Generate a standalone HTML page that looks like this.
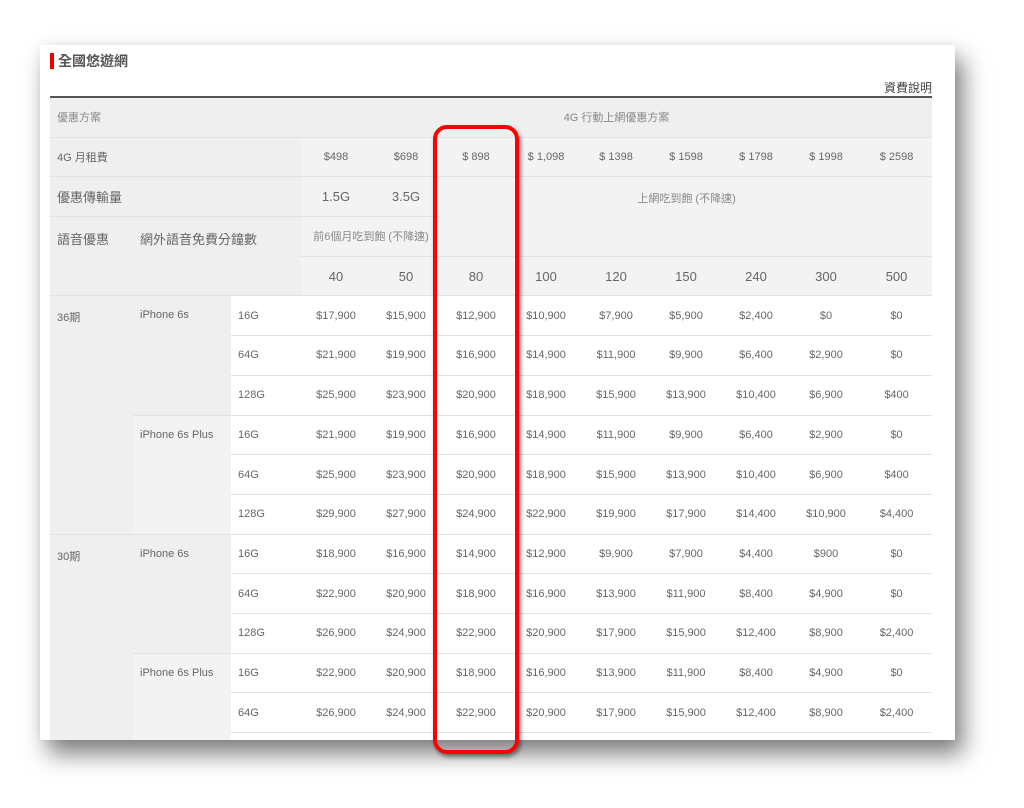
<!DOCTYPE html>
<html><head><meta charset="utf-8"><style>
body{margin:0;width:1024px;height:808px;background:#fff;position:relative;overflow:hidden;font-family:"Liberation Sans","Noto Sans CJK TC",sans-serif;color:#666}
.card{position:absolute;left:40px;top:45px;width:915px;height:695px;background:#fff;overflow:hidden;box-shadow:8px 14px 22px rgba(0,0,0,.5),0 0 10px rgba(0,0,0,.06)}
.bar{position:absolute;left:10px;top:8px;width:4px;height:16px;background:#e00}
.title{position:absolute;left:18px;top:6px;font-size:14px;font-weight:bold;color:#555;line-height:20px}
.desc{position:absolute;right:23px;top:34px;font-size:12px;color:#444}
table{position:absolute;left:10px;top:51px;width:882px;border-collapse:collapse;table-layout:fixed;border-top:2px solid #555}
td{height:38.7px;padding:0;border-bottom:1px solid #e3e3e3;font-size:11px;text-align:center;vertical-align:middle;background:#fff;color:#666;white-space:nowrap}
td.l{text-align:left;padding-left:7px}
.g{background:#efefef}.h{background:#f3f3f3}
.t{vertical-align:top;padding-top:13px}
.b{font-size:13px}
.box{position:absolute;left:433px;top:125px;width:78px;height:621px;border:4px solid #f00;border-radius:14px;box-shadow:2px 3px 4px rgba(0,0,0,.45)}
</style></head><body>
<div class="card">
<div class="bar"></div><div class="title">全國悠遊網</div><div class="desc">資費說明</div>
<table>
<colgroup><col style="width:83px"><col style="width:98px"><col style="width:70px"><col style="width:70px"><col style="width:70px"><col style="width:70px"><col style="width:70px"><col style="width:70px"><col style="width:70px"><col style="width:70px"><col style="width:70px"><col style="width:71px"></colgroup>
<tr><td class="g l" colspan="3" style="color:#888">優惠方案</td><td class="g" colspan="9" style="color:#888">4G 行動上網優惠方案</td></tr>
<tr><td class="g l" colspan="3">4G 月租費</td><td class="h">$498</td><td class="h">$698</td><td class="h">$ 898</td><td class="h">$ 1,098</td><td class="h">$ 1398</td><td class="h">$ 1598</td><td class="h">$ 1798</td><td class="h">$ 1998</td><td class="h">$ 2598</td></tr>
<tr><td class="g l b" colspan="3">優惠傳輸量</td><td class="h b">1.5G</td><td class="h b">3.5G</td><td class="h" colspan="7" rowspan="2" style="vertical-align:top;padding-top:13px;color:#888">上網吃到飽 (不降速)</td></tr>
<tr><td class="g l b" rowspan="2" style="vertical-align:top;padding-top:12px">語音優惠</td><td class="g l b" colspan="2" rowspan="2" style="vertical-align:top;padding-top:12px">網外語音免費分鐘數</td><td class="h" colspan="2" style="color:#888">前6個月吃到飽 (不降速)</td></tr>
<tr><td class="h b">40</td><td class="h b">50</td><td class="h b">80</td><td class="h b">100</td><td class="h b">120</td><td class="h b">150</td><td class="h b">240</td><td class="h b">300</td><td class="h b">500</td></tr>
<tr><td class="g l t" rowspan="6">36期</td><td class="g l t" rowspan="3">iPhone 6s</td><td class="l">16G</td><td>$17,900</td><td>$15,900</td><td>$12,900</td><td>$10,900</td><td>$7,900</td><td>$5,900</td><td>$2,400</td><td>$0</td><td>$0</td></tr>
<tr><td class="l">64G</td><td>$21,900</td><td>$19,900</td><td>$16,900</td><td>$14,900</td><td>$11,900</td><td>$9,900</td><td>$6,400</td><td>$2,900</td><td>$0</td></tr>
<tr><td class="l">128G</td><td>$25,900</td><td>$23,900</td><td>$20,900</td><td>$18,900</td><td>$15,900</td><td>$13,900</td><td>$10,400</td><td>$6,900</td><td>$400</td></tr>
<tr><td class="h l t" rowspan="3">iPhone 6s Plus</td><td class="l">16G</td><td>$21,900</td><td>$19,900</td><td>$16,900</td><td>$14,900</td><td>$11,900</td><td>$9,900</td><td>$6,400</td><td>$2,900</td><td>$0</td></tr>
<tr><td class="l">64G</td><td>$25,900</td><td>$23,900</td><td>$20,900</td><td>$18,900</td><td>$15,900</td><td>$13,900</td><td>$10,400</td><td>$6,900</td><td>$400</td></tr>
<tr><td class="l">128G</td><td>$29,900</td><td>$27,900</td><td>$24,900</td><td>$22,900</td><td>$19,900</td><td>$17,900</td><td>$14,400</td><td>$10,900</td><td>$4,400</td></tr>
<tr><td class="g l t" rowspan="6">30期</td><td class="g l t" rowspan="3">iPhone 6s</td><td class="l">16G</td><td>$18,900</td><td>$16,900</td><td>$14,900</td><td>$12,900</td><td>$9,900</td><td>$7,900</td><td>$4,400</td><td>$900</td><td>$0</td></tr>
<tr><td class="l">64G</td><td>$22,900</td><td>$20,900</td><td>$18,900</td><td>$16,900</td><td>$13,900</td><td>$11,900</td><td>$8,400</td><td>$4,900</td><td>$0</td></tr>
<tr><td class="l">128G</td><td>$26,900</td><td>$24,900</td><td>$22,900</td><td>$20,900</td><td>$17,900</td><td>$15,900</td><td>$12,400</td><td>$8,900</td><td>$2,400</td></tr>
<tr><td class="h l t" rowspan="3">iPhone 6s Plus</td><td class="l">16G</td><td>$22,900</td><td>$20,900</td><td>$18,900</td><td>$16,900</td><td>$13,900</td><td>$11,900</td><td>$8,400</td><td>$4,900</td><td>$0</td></tr>
<tr><td class="l">64G</td><td>$26,900</td><td>$24,900</td><td>$22,900</td><td>$20,900</td><td>$17,900</td><td>$15,900</td><td>$12,400</td><td>$8,900</td><td>$2,400</td></tr>
<tr><td class="l">128G</td><td>$30,900</td><td>$28,900</td><td>$26,900</td><td>$24,900</td><td>$21,900</td><td>$19,900</td><td>$16,400</td><td>$12,900</td><td>$6,400</td></tr>
</table>
</div>
<div class="box"></div>
</body></html>
